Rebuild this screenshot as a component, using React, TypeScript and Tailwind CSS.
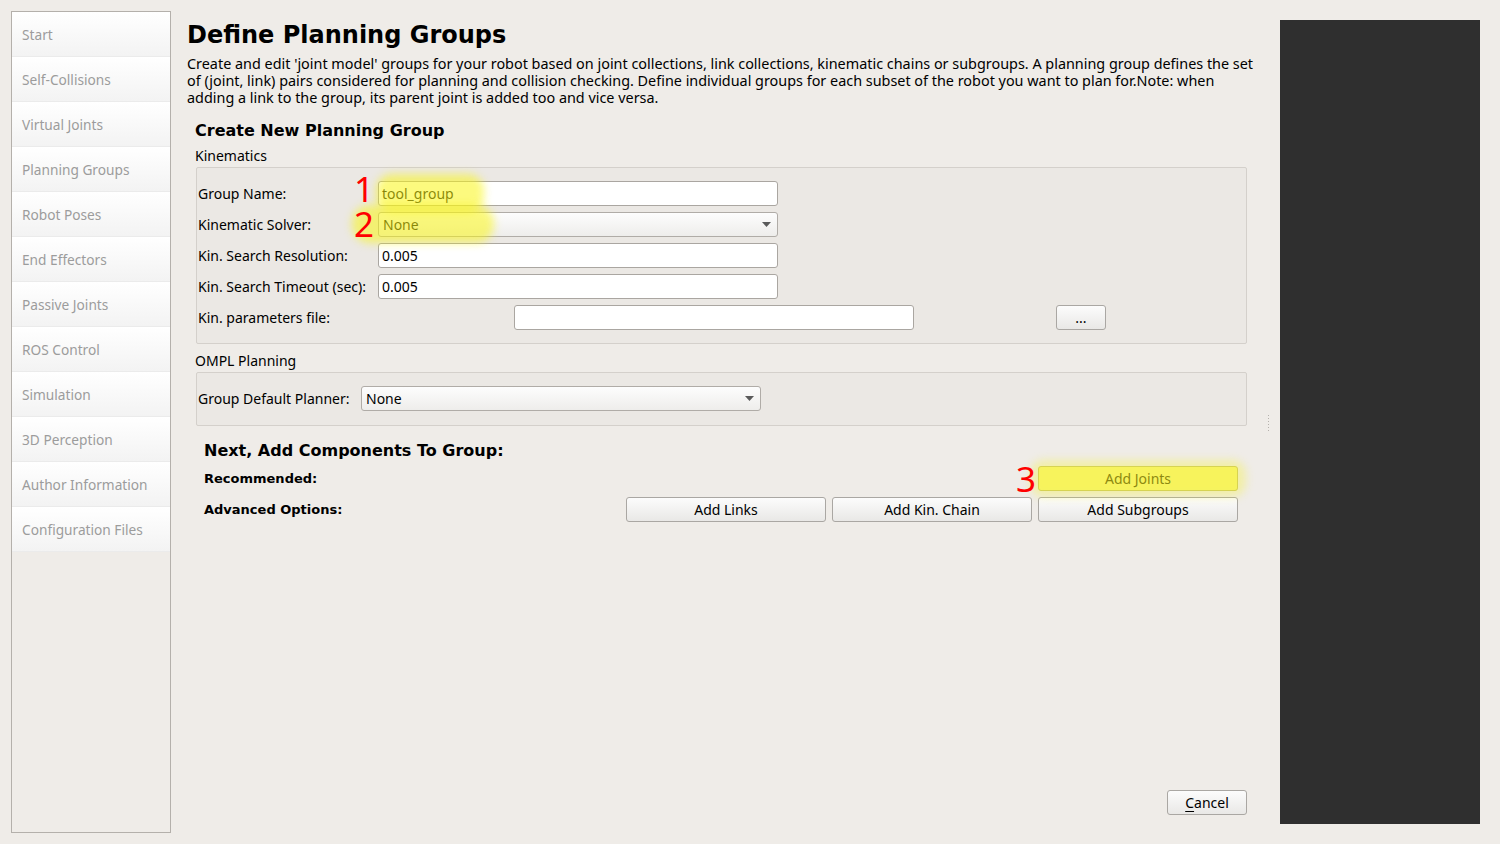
import React from "react";

const sidebarItems = [
  "Start",
  "Self-Collisions",
  "Virtual Joints",
  "Planning Groups",
  "Robot Poses",
  "End Effectors",
  "Passive Joints",
  "ROS Control",
  "Simulation",
  "3D Perception",
  "Author Information",
  "Configuration Files",
];

function Arrow() {
  return (
    <svg width="9" height="5" viewBox="0 0 9 5" className="shrink-0">
      <path d="M0 0 L9 0 L4.5 5 Z" fill="#5a5a5a" />
    </svg>
  );
}

function TextInput({ value, w = "w-[400px]" }: { value?: string; w?: string }) {
  return (
    <div
      className={`${w} h-[25px] shrink-0 rounded-[3px] border border-[#aaa6a1] bg-white pl-[3px] flex items-center text-[14px] text-black leading-none`}
    >
      {value}
    </div>
  );
}

function Combo({ value }: { value: string }) {
  return (
    <div className="w-[400px] h-[25px] shrink-0 rounded-[3px] border border-[#b0aca7] bg-gradient-to-b from-[#fdfdfd] to-[#eeedeb] pl-[4px] pr-[6px] flex items-center justify-between text-[14px] text-black leading-none">
      <span>{value}</span>
      <Arrow />
    </div>
  );
}

function Button({ label, w = "w-[200px]" }: { label: React.ReactNode; w?: string }) {
  return (
    <div
      className={`${w} h-[25px] shrink-0 rounded-[3px] border border-[#aaa7a3] bg-gradient-to-b from-[#fcfcfc] to-[#e9e8e6] flex items-center justify-center text-[14px] text-black leading-none`}
    >
      {label}
    </div>
  );
}

export default function App() {
  return (
    <div className="w-[1500px] h-[844px] bg-[#efece8] flex overflow-hidden font-['Noto_Sans',sans-serif] relative">
      {/* Sidebar */}
      <div className="ml-[11px] mt-[11px] w-[160px] h-[822px] shrink-0 border border-[#b4b0ab] flex flex-col">
        {sidebarItems.map((s) => (
          <div
            key={s}
            className="h-[45px] shrink-0 border-b border-[#ebebeb] bg-gradient-to-b from-[#ffffff] to-[#f3f3f3] pl-[10px] pt-[3px] flex items-center text-[13.7px] text-[#9c9c9c]"
          >
            {s}
          </div>
        ))}
      </div>

      {/* Main */}
      <div className="w-[1109px] shrink-0 min-w-0 relative flex flex-col pl-[16px] pr-[33px] pt-[21px]">
        <div className="font-['DejaVu_Sans',sans-serif] font-bold text-[24px] leading-[29px] text-black">
          Define Planning Groups
        </div>
        <div className="mt-[5px] text-[14.4px] leading-[17px] text-black whitespace-nowrap">
          Create and edit 'joint model' groups for your robot based on joint collections, link collections, kinematic chains or subgroups. A planning group defines the set
          <br />
          of (joint, link) pairs considered for planning and collision checking. Define individual groups for each subset of the robot you want to plan for.Note: when
          <br />
          adding a link to the group, its parent joint is added too and vice versa.
        </div>

        <div className="ml-[8px] mt-[15px] font-['DejaVu_Sans',sans-serif] font-bold text-[16px] leading-[20px] text-black">
          Create New Planning Group
        </div>
        <div className="ml-[8px] mt-[6px] text-[14px] leading-[17px] text-black">Kinematics</div>

        {/* Kinematics box */}
        <div className="ml-[9px] mt-[3px] w-[1051px] h-[177px] border border-[#d4d0cb] rounded-[2px] bg-[#ebe8e4] pl-[1px] pt-[13px] flex flex-col gap-[6px] text-[14px] text-black">
          <div className="flex items-center h-[25px]">
            <div className="w-[180px]">Group Name:</div>
            <TextInput value="tool_group" />
          </div>
          <div className="flex items-center h-[25px]">
            <div className="w-[180px]">Kinematic Solver:</div>
            <Combo value="None" />
          </div>
          <div className="flex items-center h-[25px]">
            <div className="w-[180px]">Kin. Search Resolution:</div>
            <TextInput value="0.005" />
          </div>
          <div className="flex items-center h-[25px]">
            <div className="w-[180px]">Kin. Search Timeout (sec):</div>
            <TextInput value="0.005" />
          </div>
          <div className="flex items-center h-[25px]">
            <div className="w-[316px]">Kin. parameters file:</div>
            <TextInput />
            <div className="ml-[142px]">
              <Button label="..." w="w-[50px]" />
            </div>
          </div>
        </div>

        <div className="ml-[8px] mt-[8px] text-[14px] leading-[17px] text-black">OMPL Planning</div>
        <div className="ml-[9px] mt-[3px] w-[1051px] h-[54px] border border-[#d4d0cb] rounded-[2px] bg-[#ebe8e4] pl-[1px] pt-[13px] text-[14px] text-black">
          <div className="flex items-center h-[25px]">
            <div className="w-[163px]">Group Default Planner:</div>
            <Combo value="None" />
          </div>
        </div>

        <div className="ml-[17px] mt-[15px] font-['DejaVu_Sans',sans-serif] font-bold text-[16px] leading-[20px] text-black">
          Next, Add Components To Group:
        </div>
        <div className="ml-[17px] mt-[5px] flex items-center h-[25px] w-[1034px] justify-between">
          <div className="font-['DejaVu_Sans',sans-serif] font-bold text-[13px] text-black">Recommended:</div>
          <div className="w-[200px] h-[25px] shrink-0 rounded-[3px] border border-[#c9c56a] bg-[#f6f27c] flex items-center justify-center text-[14px] text-[#5f5b10] leading-none">
            Add Joints
          </div>
        </div>
        <div className="ml-[17px] mt-[6px] flex items-center h-[25px] w-[1034px]">
          <div className="font-['DejaVu_Sans',sans-serif] font-bold text-[13px] text-black">Advanced Options:</div>
          <div className="ml-auto flex gap-[6px]">
            <Button label="Add Links" />
            <Button label="Add Kin. Chain" />
            <Button label="Add Subgroups" />
          </div>
        </div>

        <div className="mt-auto mb-[29px] self-end">
          <Button
            w="w-[80px]"
            label={
              <span>
                <span className="underline underline-offset-[3px]">C</span>ancel
              </span>
            }
          />
        </div>

        {/* Splitter handle */}
        <div className="absolute right-[11px] top-[415px] flex flex-col gap-[2px]">
          {[0, 1, 2, 3, 4, 5].map((i) => (
            <div key={i} className="w-[1px] h-[1px] bg-[#b5b1ac]" />
          ))}
        </div>
      </div>

      {/* Right dark panel */}
      <div className="mt-[20px] mb-[20px] w-[200px] h-[804px] shrink-0 bg-[#2f2f2f]" />

      {/* Highlight overlays */}
      <div className="absolute left-[376px] top-[174px] w-[108px] h-[38px] rounded-[16px] bg-[rgba(250,246,20,0.55)] blur-[4px] pointer-events-none" />
      <div className="absolute left-[352px] top-[205px] w-[142px] h-[38px] rounded-[18px] bg-[rgba(250,246,20,0.55)] blur-[4px] pointer-events-none" />
      <div className="absolute left-[1030px] top-[460px] w-[216px] h-[37px] rounded-[14px] bg-[rgba(250,246,20,0.3)] blur-[4px] pointer-events-none" />

      <div className="absolute left-[354px] top-[169px] text-[#ff0000] text-[35px] leading-[40px] font-['Noto_Sans',sans-serif]">1</div>
      <div className="absolute left-[354px] top-[204px] text-[#ff0000] text-[35px] leading-[40px] font-['Noto_Sans',sans-serif]">2</div>
      <div className="absolute left-[1016px] top-[459px] text-[#ff0000] text-[35px] leading-[40px] font-['Noto_Sans',sans-serif]">3</div>
    </div>
  );
}
